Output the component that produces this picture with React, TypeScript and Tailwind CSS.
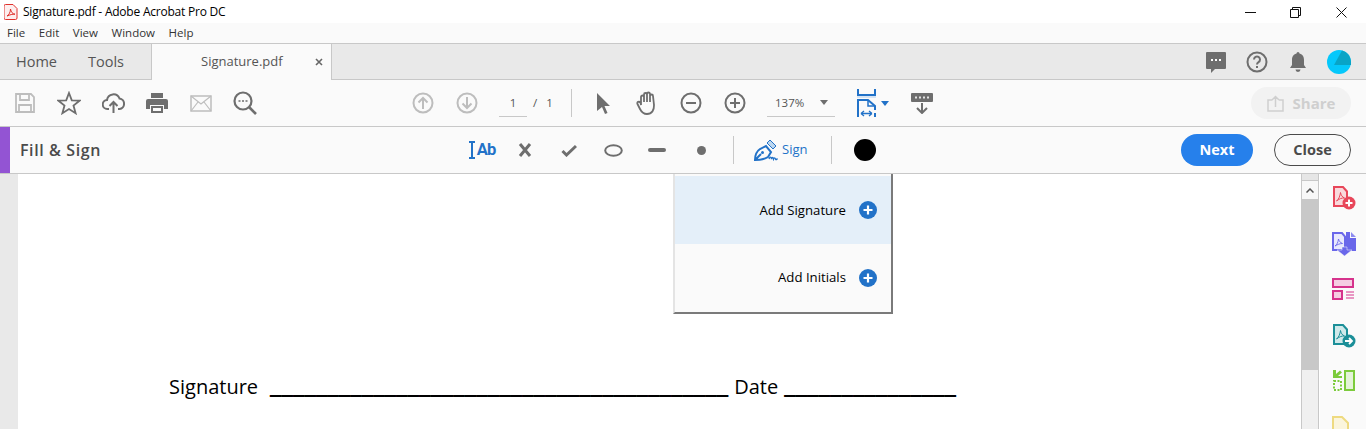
import type { ReactNode } from 'react';

const FONT = "font-['Open_Sans','Noto_Sans',sans-serif]";

function Slot({ narrow, children }: { narrow?: boolean; children: ReactNode }) {
  return (
    <div className={`flex shrink-0 items-center justify-center ${narrow ? 'w-[41px]' : 'w-[44px]'}`}>
      {children}
    </div>
  );
}

function Svg({ w = 24, h = 24, children }: { w?: number; h?: number; children: ReactNode }) {
  return (
    <svg className="shrink-0" width={w} height={h} viewBox={`0 0 ${w} ${h}`} fill="none">
      {children}
    </svg>
  );
}

function PdfLogo() {
  return (
    <Svg w={14} h={16}>
      <path d="M1.5.5h7.5l4 4v9.500a1.500 1.500 0 0 1-1.500 1.500h-10a1.500 1.500 0 0 1-1.500-1.500v-12a1.500 1.500 0 0 1 1.500-1.500z" fill="#fdeeee" stroke="#e0312c" />
      <path d="M3 12c2-1 3.500-4 3.500-7 .5 3 2 5 4.500 5.200-2.500-.2-5 .6-8 1.800z" stroke="#e0312c" strokeWidth="1" />
    </Svg>
  );
}

function CircleArrow({ dir, color }: { dir: 'up' | 'down'; color: string }) {
  return (
    <Svg w={22} h={22}>
      <circle cx="11" cy="11" r="9.500" stroke={color} strokeWidth="2" />
      {dir === 'up' ? (
        <path d="M11 17V6M6.500 10.500L11 6l4.500 4.500" stroke={color} strokeWidth="2" />
      ) : (
        <path d="M11 5v11M6.500 11.500L11 16l4.500-4.500" stroke={color} strokeWidth="2" />
      )}
    </Svg>
  );
}

function Zoom({ plus }: { plus?: boolean }) {
  return (
    <Svg w={22} h={22}>
      <circle cx="11" cy="11" r="9.500" stroke="#6e6e6e" strokeWidth="2" />
      <path d="M6 11h10" stroke="#6e6e6e" strokeWidth="2" />
      {plus && <path d="M11 6v10" stroke="#6e6e6e" strokeWidth="2" />}
    </Svg>
  );
}

function PlusBadge() {
  return (
    <svg width="18" height="18" viewBox="0 0 18 18">
      <circle cx="9" cy="9" r="9" fill="#2272c8" />
      <path d="M9 4.500v9M4.500 9h9" stroke="#fff" strokeWidth="2.200" />
    </svg>
  );
}

function Rail() {
  return (
    <div className="flex w-[46px] shrink-0 flex-col items-start gap-[22px] overflow-hidden bg-[#fafafa] pl-[12px] pt-[12px]">
      <Svg w={24} h={24}>
        <path d="M2 1h9l4 4.500V20H2z" fill="#f9d9dc" stroke="#e8475a" strokeWidth="2" />
        <path d="M4.500 15c2.500-2 3.500-5 4-8.500.5 2.500 1.500 4.500 4 5.500-3-.2-5 .8-8 3z" stroke="#e8475a" strokeWidth="1" />
        <circle cx="17" cy="17" r="6.500" fill="#e8475a" />
        <path d="M17 13.500v7M13.500 17h7" stroke="#fff" strokeWidth="2" />
      </Svg>
      <Svg w={24} h={24}>
        <path d="M1 1h9l3 3.500V18H1z" fill="#e8e8fd" stroke="#6a67ea" strokeWidth="2" />
        <path d="M3 14c2-1.500 3-3.500 3.500-7 .5 2 1.500 3.500 4 4.500-2.500 0-5 1-7.500 2.500z" stroke="#6a67ea" strokeWidth=".9" />
        <path d="M14 0h4v6h6v13H14z" fill="#6a67ea" />
        <path d="M19 0l5 5h-5z" fill="#8d8bf0" />
        <path d="M10 15h5v3h5l-7.500 6L5 18h5z" fill="#6a67ea" stroke="#fafafa" strokeWidth=".5" />
      </Svg>
      <Svg w={24} h={24}>
        <rect x="1" y="1" width="20" height="8" fill="#f5cde2" stroke="#d6338c" strokeWidth="2" />
        <rect x="1" y="13" width="9" height="8" fill="#f5cde2" stroke="#d6338c" strokeWidth="2" />
        <path d="M14 14h8M14 17h8M14 20h8" stroke="#d6338c" strokeWidth="1" />
      </Svg>
      <Svg w={24} h={24}>
        <path d="M2 1h9l4 4.500V20H2z" fill="#cfe9ea" stroke="#1b8f98" strokeWidth="2" />
        <path d="M4.500 15c2.500-2 3.500-5 4-8.500.5 2.500 1.500 4.500 4 5.500-3-.2-5 .8-8 3z" stroke="#1b8f98" strokeWidth="1" />
        <circle cx="17" cy="17" r="6.500" fill="#1b8f98" />
        <path d="M13 17h6.500M17 14l3 3-3 3" stroke="#fff" strokeWidth="1.800" />
      </Svg>
      <Svg w={24} h={24}>
        <rect x="13" y="1" width="9" height="19" fill="#e4f3d8" stroke="#7ccb3c" strokeWidth="2" />
        <path d="M2 11h7v9H2z" stroke="#7ccb3c" strokeWidth="2" strokeDasharray="2 1.500" />
        <path d="M1 0v8h9V6H6l4-3.500L8 .5 4 4V0z" fill="#7ccb3c" />
      </Svg>
      <Svg w={24} h={24}>
        <path d="M1 1h9l6 6v16H1z" fill="#fbf5dc" stroke="#eeda80" strokeWidth="2" />
        <circle cx="17" cy="19" r="6" fill="#eeda80" />
      </Svg>
    </div>
  );
}

export default function App() {
  return (
    <div className={`flex h-[429px] w-[1366px] flex-col overflow-hidden bg-white ${FONT}`}>
      {/* Title bar */}
      <div className="flex h-[23px] shrink-0 items-center bg-white pl-[4px] pt-[1px] text-[12px] text-black">
        <PdfLogo />
        <span className="ml-[5px] tracking-[-0.22px]">Signature.pdf - Adobe Acrobat Pro DC</span>
        <div className="ml-auto flex items-center pr-[19px]">
          <Svg w={11} h={11}>
            <path d="M0 5.500h11" stroke="#111" />
          </Svg>
          <div className="ml-[34px]">
            <Svg w={11} h={11}>
              <path d="M2.500 2.500V.5h8v8h-2M.5 2.500h8v8h-8z" stroke="#111" />
            </Svg>
          </div>
          <div className="ml-[35px]">
            <Svg w={11} h={11}>
              <path d="M.5.5l10 10M10.500.5l-10 10" stroke="#111" />
            </Svg>
          </div>
        </div>
      </div>

      {/* Menu bar */}
      <div className="flex h-[21px] shrink-0 items-center gap-[13.6px] border-b border-[#c8c8c8] bg-[#fafafa] pl-[7px] text-[11.5px] text-[#333]">
        <span>File</span>
        <span>Edit</span>
        <span>View</span>
        <span>Window</span>
        <span>Help</span>
      </div>

      {/* Tabs */}
      <div className="flex h-[36px] shrink-0 items-stretch border-b border-[#c8c8c8] bg-[#e9e9e9]">
        <div className="flex w-[151px] items-center pl-[16px] text-[14.5px] text-[#555]">
          <span className="w-[72px]">Home</span>
          <span>Tools</span>
        </div>
        <div className="relative -mb-px flex w-[181px] items-center border-x border-[#c8c8c8] bg-[#fafafa] pl-[49px] text-[13px] text-[#555]">
          <span>Signature.pdf</span>
          <span className="ml-auto pr-[8px]">
            <Svg w={8} h={8}>
              <path d="M1 1l6 6M7 1L1 7" stroke="#666" strokeWidth="1.600" />
            </Svg>
          </span>
        </div>
        <div className="ml-auto flex items-center pr-[7px]">
          <Slot narrow>
            <Svg w={22} h={22}>
              <path d="M2 1h18a1 1 0 0 1 1 1v15a1 1 0 0 1-1 1H10l-4 4v-4H2a1 1 0 0 1-1-1V2a1 1 0 0 1 1-1z" fill="#6e6e6e" />
              <path d="M6 9h2M10 9h2M14 9h2" stroke="#fff" strokeWidth="1.800" />
            </Svg>
          </Slot>
          <Slot narrow>
            <Svg w={22} h={22}>
              <circle cx="11" cy="11" r="9.500" stroke="#6e6e6e" strokeWidth="2" />
              <path d="M8 8.500a3 3 0 1 1 4.500 2.600c-1 .6-1.500 1-1.500 2.400M11 15v2" stroke="#6e6e6e" strokeWidth="2" />
            </Svg>
          </Slot>
          <Slot narrow>
            <Svg w={18} h={22}>
              <path d="M9 1a1.500 1.500 0 0 1 1.500 1.500C14 3.500 15 6 15 9v5l2 3H1l2-3V9c0-3 1-5.500 4.500-6.500A1.500 1.500 0 0 1 9 1zM6.500 18.500h5A2.500 2.500 0 0 1 6.500 18.500z" fill="#6e6e6e" />
            </Svg>
          </Slot>
          <Slot narrow>
            <Svg w={24} h={24}>
              <circle cx="12" cy="12" r="12" fill="#05c8fb" />
              <path d="M15 .4A12 12 0 0 1 24 12v3H7z" fill="#09a4c6" />
            </Svg>
          </Slot>
        </div>
      </div>

      {/* Main toolbar */}
      <div className="flex h-[47px] shrink-0 items-center border-b border-[#c8c8c8] bg-[#fafafa] pl-[3px]">
        <Slot>
          <Svg w={20} h={20}>
            <path d="M1 1h15l3 3v15H1z" stroke="#bdbdbd" strokeWidth="1.800" />
            <path d="M5 1v6h9V1M4 19v-7h12v7" stroke="#bdbdbd" strokeWidth="1.800" />
          </Svg>
        </Slot>
        <Slot>
          <Svg w={24} h={24}>
            <path d="M12 2l2.800 7.400 7.700.3-6 4.900 2.100 7.600L12 18l-6.600 4.200 2.100-7.600-6-4.900 7.700-.3z" stroke="#6e6e6e" strokeWidth="1.800" />
          </Svg>
        </Slot>
        <Slot>
          <Svg w={23} h={22}>
            <path d="M7 17H5.500A4.500 4.500 0 0 1 5 8a6.500 6.500 0 0 1 12.500-1.500A5.300 5.300 0 0 1 17.500 17H16" stroke="#6e6e6e" strokeWidth="2" />
            <path d="M11.500 21V10M7.500 14l4-4 4 4" stroke="#6e6e6e" strokeWidth="2" />
          </Svg>
        </Slot>
        <Slot>
          <Svg w={22} h={21}>
            <path d="M5 0h12v5H5z" fill="#6e6e6e" />
            <path d="M2 6h18a2 2 0 0 1 2 2v8h-4v-4H4v4H0V8a2 2 0 0 1 2-2z" fill="#6e6e6e" />
            <path d="M5 13h12v7H5z" fill="#6e6e6e" />
            <path d="M7 15h8v3H7z" fill="#fafafa" />
          </Svg>
        </Slot>
        <Slot>
          <Svg w={22} h={17}>
            <rect x="1" y="1" width="20" height="15" stroke="#bdbdbd" strokeWidth="1.500" />
            <path d="M1 1l10 8 10-8M1 16l7-9M21 16l-7-9" stroke="#bdbdbd" strokeWidth="1.200" />
          </Svg>
        </Slot>
        <Slot>
          <Svg w={24} h={24}>
            <circle cx="10" cy="10" r="8.500" stroke="#6e6e6e" strokeWidth="2.200" />
            <path d="M16 16l7 7" stroke="#6e6e6e" strokeWidth="2.600" />
            <path d="M5.500 10h2M9 10h2M12.500 10h2" stroke="#6e6e6e" strokeWidth="1.500" />
          </Svg>
        </Slot>

        <div className="ml-[134px] flex w-[170px] shrink-0 items-center">
          <Slot>
            <CircleArrow dir="up" color="#bdbdbd" />
          </Slot>
          <Slot>
            <CircleArrow dir="down" color="#bdbdbd" />
          </Slot>
          <div className="ml-[10px] flex h-[28px] w-[28px] items-center justify-center border-b border-[#c8c8c8] text-[11.5px] text-[#555]">
            1
          </div>
          <span className="ml-[6px] text-[11.5px] text-[#555]">/</span>
          <span className="ml-[9px] text-[11.5px] text-[#555]">1</span>
        </div>
        <div className="h-[28px] w-px bg-[#c8c8c8]" />
        <div className="ml-[9px] flex items-center">
          <Slot>
            <Svg w={15} h={23}>
              <path d="M1 1l13 13H8.500l3 7-2.500 1-3-7L1 19z" fill="#6e6e6e" />
            </Svg>
          </Slot>
          <Slot>
            <Svg w={22} h={24}>
              <path d="M5 14V6a1.500 1.500 0 0 1 3 0v5V3.500a1.500 1.500 0 0 1 3 0V11 3a1.500 1.500 0 0 1 3 0v8-6a1.500 1.500 0 0 1 3 0l1 9c.2 5-2 9-7 9-4 0-5.500-2-7-5L1.500 13c-1-2 1.500-3 3-1.500z" stroke="#6e6e6e" strokeWidth="1.800" />
            </Svg>
          </Slot>
          <Slot>
            <Zoom />
          </Slot>
          <Slot>
            <Zoom plus />
          </Slot>
        </div>
        <div className="ml-[10px] flex h-[28px] w-[68px] items-center border-b border-[#c8c8c8] pl-[8px] text-[11.5px] text-[#555]">
          <span>137%</span>
          <span className="ml-auto mr-[7px] h-0 w-0 border-x-[4px] border-t-[5px] border-x-transparent border-t-[#6e6e6e]" />
        </div>
        <div className="ml-[22px] flex items-center gap-[4px]">
          <Svg w={20} h={28}>
            <path d="M1 0v6h17V0" stroke="#2272c8" strokeWidth="2" />
            <path d="M0 8h19" stroke="#d5e4f4" strokeWidth="2" />
            <path d="M1 28V11h10l7 6v4M1 21v7M18 24v4" stroke="#2272c8" strokeWidth="2" />
            <path d="M11 11v6h7" stroke="#2272c8" strokeWidth="1.500" />
            <path d="M4 24.500h11M4 24.500l3-2.500M4 24.500l3 2.500M15 24.500l-3-2.500M15 24.500l-3 2.500" stroke="#2272c8" strokeWidth="1.300" />
          </Svg>
          <span className="h-0 w-0 border-x-[4px] border-t-[5px] border-x-transparent border-t-[#2272c8]" />
        </div>
        <div className="ml-[22px]">
          <Svg w={22} h={21}>
            <rect x="0" y="0" width="22" height="9" rx="1" fill="#6e6e6e" />
            <path d="M4 4.500h2M8 4.500h2M12 4.500h2M16 4.500h2" stroke="#e4e4e4" strokeWidth="2" />
            <path d="M11 10v10M6 15l5 5 5-5" stroke="#6e6e6e" strokeWidth="2" />
          </Svg>
        </div>
        <div className="ml-auto mr-[15px] flex h-[32px] w-[100px] items-center justify-center gap-[9px] rounded-full bg-[#f2f2f2] text-[15px] font-bold text-[#cfcfcf]">
          <Svg w={17} h={17}>
            <path d="M5 5H1v11h15V5h-4M8.500 12V2M5 5l3.500-3.500L12 5" stroke="#cfcfcf" strokeWidth="1.500" />
          </Svg>
          <span>Share</span>
        </div>
      </div>

      {/* Fill & Sign bar */}
      <div className="flex h-[47px] shrink-0 items-center border-b border-[#c8c8c8] bg-[#fafafa]">
        <div className="h-full w-[10px] bg-[#9354d3]" />
        <span className="ml-[10px] w-[80px] whitespace-nowrap text-[16px] font-semibold tracking-[0.6px] text-[#4b4b4b]">Fill &amp; Sign</span>
        <div className="ml-[359px] flex items-center">
          <Slot>
            <div className="ml-[2px] flex items-center">
              <Svg w={6} h={18}>
                <path d="M0 1h6M0 17h6M3 1v16" stroke="#2272c8" strokeWidth="2" />
              </Svg>
              <span className="ml-[2px] mt-[1px] font-['Roboto',sans-serif] text-[16.5px] font-bold leading-none tracking-[-1px] text-[#2272c8]">Ab</span>
            </div>
          </Slot>
          <Slot>
            <Svg w={14} h={14}>
              <path d="M2 1l10 12M12 1L2 13" stroke="#6e6e6e" strokeWidth="3" />
            </Svg>
          </Slot>
          <Slot>
            <Svg w={16} h={13}>
              <path d="M1.500 7l4 4L15 2" stroke="#6e6e6e" strokeWidth="3" />
            </Svg>
          </Slot>
          <Slot>
            <Svg w={19} h={13}>
              <ellipse cx="9.500" cy="6.500" rx="8.300" ry="5.300" stroke="#6e6e6e" strokeWidth="2" />
            </Svg>
          </Slot>
          <Slot>
            <div className="h-[4px] w-[18px] rounded-full bg-[#6e6e6e]" />
          </Slot>
          <Slot>
            <div className="h-[9px] w-[9px] rounded-full bg-[#6e6e6e]" />
          </Slot>
        </div>
        <div className="ml-[10px] h-[28px] w-px bg-[#c8c8c8]" />
        <div className="ml-[20px] flex items-center gap-[3px] text-[13px] text-[#2272c8]">
          <Svg w={25} h={22}>
            <path d="M1 21c0-5 2-9 5-11l6-3 5 6-3 5c-3 2-7 3-13 3zM1 21l6-6" stroke="#2272c8" strokeWidth="2" />
            <circle cx="8.500" cy="13.500" r="1.500" fill="#2272c8" />
            <path d="M13 4l3-3 6 6-3 3z" fill="#bcd7f0" stroke="#2272c8" strokeWidth="1" />
            <path d="M15 20c1-2.500 2-2.500 2.500 0 .5-2 1.500-2 2 0 .5-1.500 1.500-1.500 2 0s1.500 0 2-.5" stroke="#2272c8" strokeWidth="1.400" />
          </Svg>
          <span>Sign</span>
        </div>
        <div className="ml-[24px] h-[28px] w-px bg-[#c8c8c8]" />
        <div className="ml-[22px] h-[22px] w-[22px] rounded-full bg-black" />
        <div className="ml-auto mr-[15px] flex items-center gap-[21px] text-[14.500px] font-bold">
          <button className="flex h-[32px] w-[72px] items-center justify-center rounded-full bg-[#2680eb] text-white">Next</button>
          <button className="flex h-[32px] w-[77px] items-center justify-center rounded-full border border-[#4b4b4b] text-[#4b4b4b]">Close</button>
        </div>
      </div>

      {/* Document area */}
      <div className="relative flex min-h-0 flex-1">
        <div className="w-[18px] shrink-0 bg-[#e9e9e9]" />
        <div className="min-w-0 flex-1 bg-white pl-[151px] pt-[200px]">
          <p className="whitespace-nowrap text-[20px] leading-[26px] text-black">
            <span className="mr-[12px]">Signature</span>
            <span className="mr-[6px] font-['Liberation_Sans',sans-serif] text-[20.6px] font-bold [text-shadow:0_-1px_0_#000]">________________________________________</span>
            <span className="mr-[6px]">Date</span>
            <span className="font-['Liberation_Sans',sans-serif] text-[20.6px] font-bold [text-shadow:0_-1px_0_#000]">_______________</span>
          </p>
        </div>

        {/* Scrollbar */}
        <div className="flex w-[18px] shrink-0 flex-col border-x border-[#c8c8c8] bg-[#f0f0f0]">
          <div className="h-[7px] border-b border-[#c8c8c8] bg-[#e6e6e6]" />
          <div className="flex h-[18px] items-center justify-center bg-[#f8f8f8]">
            <Svg w={8} h={5}>
              <path d="M.5 4.500L4 1l3.500 3.500" stroke="#555" strokeWidth="1.500" />
            </Svg>
          </div>
          <div className="h-[171px] bg-[#c8c8c8]" />
        </div>
        <div className="w-px shrink-0 bg-white" />
        <Rail />

        {/* Signature dropdown */}
        <div className="absolute left-[673px] top-0 flex h-[140px] w-[220px] flex-col border-2 border-t-0 border-l-[#e4e4e4] border-b-[#7a7a7a] border-r-[#7a7a7a] bg-[#fafafa] text-[13.2px] text-black">
          <div className="mt-[2px] flex h-[68px] items-center justify-end gap-[13px] bg-[#e4eff9] pr-[14px]">
            <span className="pt-[1px]">Add Signature</span>
            <PlusBadge />
          </div>
          <div className="flex h-[68px] items-center justify-end gap-[13px] pr-[14px]">
            <span>Add Initials</span>
            <PlusBadge />
          </div>
        </div>
      </div>
    </div>
  );
}
